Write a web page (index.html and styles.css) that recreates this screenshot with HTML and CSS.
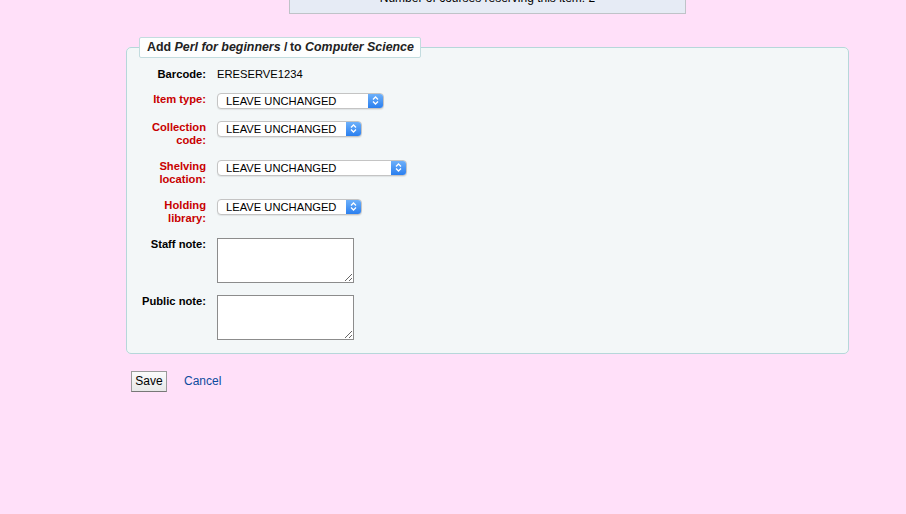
FILE: index.html
```html
<!DOCTYPE html>
<html>
<head>
<meta charset="utf-8">
<link rel="stylesheet" href="styles.css">
</head>
<body>
<div class="topbox">Number of courses reserving this item: 2</div>
<div class="main">
  <fieldset class="panel">
    <legend>Add <i>Perl for beginners</i> /&thinsp;to <i>Computer Science</i></legend>
    <div class="row first">
      <div class="lbl">Barcode:</div>
      <div class="val">ERESERVE1234</div>
    </div>
    <div class="row">
      <div class="lbl req">Item type:</div>
      <div class="sel w167"><span class="txt">LEAVE UNCHANGED</span><span class="arr"><svg width="7" height="11" viewBox="0 0 7 11"><path d="M1 4.5 L3.5 2 L6 4.5 M1 6.5 L3.5 9 L6 6.5" fill="none" stroke="#fff" stroke-width="1.3"/></svg></span></div>
    </div>
    <div class="row">
      <div class="lbl req">Collection code:</div>
      <div class="sel w145"><span class="txt">LEAVE UNCHANGED</span><span class="arr"><svg width="7" height="11" viewBox="0 0 7 11"><path d="M1 4.5 L3.5 2 L6 4.5 M1 6.5 L3.5 9 L6 6.5" fill="none" stroke="#fff" stroke-width="1.3"/></svg></span></div>
    </div>
    <div class="row">
      <div class="lbl req">Shelving location:</div>
      <div class="sel w190"><span class="txt">LEAVE UNCHANGED</span><span class="arr"><svg width="7" height="11" viewBox="0 0 7 11"><path d="M1 4.5 L3.5 2 L6 4.5 M1 6.5 L3.5 9 L6 6.5" fill="none" stroke="#fff" stroke-width="1.3"/></svg></span></div>
    </div>
    <div class="row">
      <div class="lbl req">Holding library:</div>
      <div class="sel w145"><span class="txt">LEAVE UNCHANGED</span><span class="arr"><svg width="7" height="11" viewBox="0 0 7 11"><path d="M1 4.5 L3.5 2 L6 4.5 M1 6.5 L3.5 9 L6 6.5" fill="none" stroke="#fff" stroke-width="1.3"/></svg></span></div>
    </div>
    <div class="row">
      <div class="lbl">Staff note:</div>
      <textarea class="ta"></textarea>
    </div>
    <div class="row last">
      <div class="lbl">Public note:</div>
      <textarea class="ta"></textarea>
    </div>
  </fieldset>
  <div class="actions">
    <button class="btn">Save</button>
    <a class="cancel" href="#">Cancel</a>
  </div>
</div>
</body>
</html>
```
FILE: styles.css
```css
html, body {
  margin: 0;
  padding: 0;
  background: #ffe0f9;
  font-family: "Liberation Sans", Arial, sans-serif;
  font-size: 11.2px;
  color: #000;
}
.topbox {
  margin-left: 289px;
  width: 395px;
  height: 24px;
  margin-top: -12px;
  background: #e6ebf5;
  border: 1px solid #bfc3c8;
  font-size: 12px;
  line-height: 18px;
  text-align: center;
}
.main {
  padding-left: 126px;
  padding-top: 23px;
}
.panel {
  width: 723px;
  box-sizing: border-box;
  margin: 0;
  padding: 10px 0 13px 0;
  border: 1px solid #b6d7da;
  border-radius: 5px;
  background: #f3f7f8;
}
.panel legend {
  margin-left: 12px;
  padding: 0 6px 0 7px;
  height: 19px;
  line-height: 19px;
  background: #fdfefe;
  border: 1px solid #c3dcdf;
  border-radius: 2px;
  font-size: 12.4px;
  font-weight: bold;
  color: #222;
}
.row {
  display: flex;
  align-items: flex-start;
  margin-bottom: 12px;
}
.row.first { margin-bottom: 11px; }
.row.last { margin-bottom: 0; }
.lbl {
  width: 79px;
  margin-right: 11px;
  text-align: right;
  font-weight: bold;
  line-height: 13.5px;
  flex: none;
}
.lbl.req { color: #c80000; }
.val { line-height: 13.5px; }
.sel {
  height: 16px;
  box-sizing: border-box;
  display: flex;
  align-items: stretch;
  background: #fff;
  border: 1px solid #c4c4c4;
  border-radius: 4px;
  overflow: hidden;
  box-shadow: 0 1px 1px rgba(0,0,0,0.08);
}
.sel .txt {
  flex: 1;
  padding-left: 8px;
  line-height: 14px;
}
.sel .arr {
  width: 15px;
  background: linear-gradient(#6db0fa, #2a7fef);
  display: flex;
  align-items: center;
  justify-content: center;
}
.w167 { width: 167px; }
.w145 { width: 145px; }
.w190 { width: 190px; }
.ta {
  width: 137px;
  height: 45px;
  box-sizing: border-box;
  margin: 0;
  border: 1px solid #8c8c8c;
  background: #fff;
  padding: 2px;
  font-family: inherit;
}
.actions {
  display: flex;
  align-items: center;
  margin-top: 17px;
  padding-left: 5px;
}
.btn {
  width: 36px;
  height: 21px;
  padding: 0;
  font-family: "Liberation Sans", Arial, sans-serif;
  font-size: 12px;
  color: #000;
  background: linear-gradient(#fbfbfb, #e8e8e8);
  border: 1px solid #9a9a9a;
  border-bottom-color: #777;
  border-radius: 0;
}
.cancel {
  margin-left: 17px;
  font-size: 12px;
  color: #0d4c9e;
  text-decoration: none;
}
```
